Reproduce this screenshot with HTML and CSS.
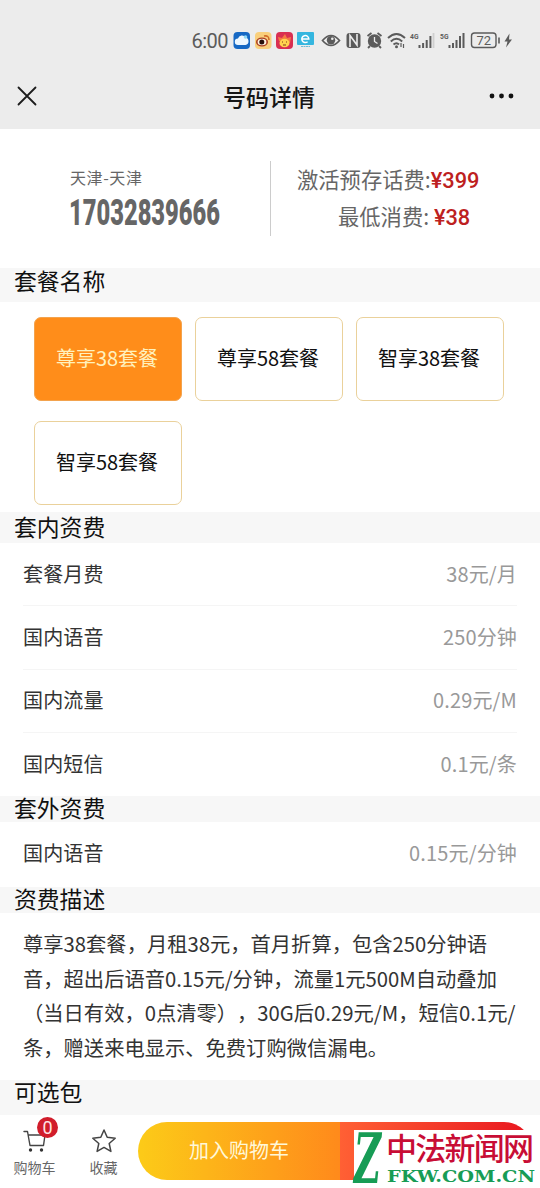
FILE: index.html
```html
<!DOCTYPE html>
<html lang="zh-CN">
<head>
<meta charset="utf-8">
<title>号码详情</title>
<link rel="stylesheet" href="styles.css">
</head>
<body>
<header class="top">
  <div class="status">
    <svg width="540" height="68" viewBox="0 0 540 68" font-family="Roboto, sans-serif" fill="#5b5b5b">
      <text x="191.500" y="47.500" font-size="20" textLength="37">6:00</text>
      <rect x="233.500" y="32" width="16.500" height="17" rx="4" fill="#1769c4"/>
      <path d="M238 45a3.200 3.200 0 0 1 0-6.400 4.200 4.200 0 0 1 7.500-1.200 3.900 3.900 0 0 1 0 7.600z" fill="#eef8ff"/>
      <circle cx="245.500" cy="37" r="1.800" fill="#8fd8f4"/>
      <rect x="255" y="32" width="16.500" height="17" rx="4" fill="#f9cf7c"/>
      <ellipse cx="262" cy="42" rx="6" ry="4.500" fill="#a93d20"/>
      <ellipse cx="262" cy="42" rx="4.400" ry="3.200" fill="#fff1df"/>
      <circle cx="261.800" cy="42" r="2.500" fill="#27100c"/>
      <path d="M264 36q5-1 5 4" fill="none" stroke="#d06a27" stroke-width="1.600"/>
      <rect x="276" y="32" width="17" height="17" rx="4" fill="#d92f51"/>
      <path d="M279 41l-1-4 4 1 3-4 2 4 4-1-1 6z" fill="#f47a43"/>
      <ellipse cx="284.500" cy="43" rx="5" ry="4.300" fill="#ffd34d"/>
      <path d="M282 42h1m3 0h1m-4 3h3" stroke="#81351d" stroke-width="1.200"/>
      <rect x="297" y="32" width="17" height="13" rx="1" fill="#35b6df"/>
      <path d="M302.500 39h6.300a3.500 3.500 0 1 0-1.200 2.700" fill="none" stroke="#fff" stroke-width="1.500"/>
      <path d="M301 46.500h9" stroke="#6fbcd6" stroke-width="1.200" stroke-dasharray="2 .5"/>
      <path d="M322.500 40.500q8.500-10 17 0-8.500 10-17 0z" fill="none" stroke="#5b5b5b" stroke-width="1.700"/>
      <circle cx="331" cy="40.300" r="4.200"/><circle cx="332.300" cy="38.800" r="1.300" fill="#ececec"/>
      <rect x="346.500" y="33" width="14" height="15" rx="3"/>
      <path d="M350 47V35.500l7 9.500V34" fill="none" stroke="#ececec" stroke-width="1.600"/>
      <circle cx="374.500" cy="41" r="6.700"/>
      <path d="M367.500 36l4-3m10 3l-4-3M370 46l-2 2m11-2l2 2" stroke="#5b5b5b" stroke-width="1.800"/>
      <path d="M374.500 37v4.500l3 2" fill="none" stroke="#ececec" stroke-width="1.300"/>
      <g fill="none" stroke="#5b5b5b" stroke-width="1.900"><path d="M388 38q8.500-8 17 0M390.800 41.500q5.700-5.500 11.400 0M393.500 44.500q3-2.500 5.500 0"/></g>
      <circle cx="396.500" cy="46.700" r="1.500"/><path d="M401 43v4m2.500-3v4" stroke="#5b5b5b" stroke-width="1.200"/>
      <text x="410" y="39" font-size="8" font-weight="700" textLength="8.500" lengthAdjust="spacingAndGlyphs">4G</text>
      <path d="M419.500 48v-3m3.600 3v-5m3.600 5v-8m3.700 8V36" stroke="#5b5b5b" stroke-width="2"/>
      <path d="M433.500 48V33" stroke="#cfcfcf" stroke-width="1.800"/>
      <text x="440" y="39" font-size="8" font-weight="700" textLength="8.500" lengthAdjust="spacingAndGlyphs">5G</text>
      <path d="M449.500 48v-3m3.500 3v-5m3.500 5v-8m3.500 8V36m3.500 12V33" stroke="#5b5b5b" stroke-width="2"/>
      <rect x="471.500" y="33" width="24.500" height="14.500" rx="3" fill="none" stroke="#5b5b5b" stroke-width="1.400"/>
      <text x="476.500" y="45" font-size="13" textLength="14.500">72</text>
      <path d="M499 37.500v6" stroke="#5b5b5b" stroke-width="1.600"/>
      <path d="M509.500 33.500l-5 8h3l-1.500 6 6-8h-3z"/>
    </svg>
  </div>
  <div class="nav">
    <svg width="20" height="20" viewBox="0 0 20 20"><path d="M1.500 1.500l17 17m0-17l-17 17" stroke="#1c1c1c" stroke-width="1.800" stroke-linecap="round"/></svg>
    <h1 class="nav-title">号码详情</h1>
    <svg width="25" height="6" viewBox="0 0 25 6" fill="#111"><circle cx="3" cy="3" r="2.400"/><circle cx="12.500" cy="3" r="2.400"/><circle cx="22" cy="3" r="2.400"/></svg>
  </div>
</header>

<section class="summary">
  <div class="number">
    <div class="region">天津-天津</div>
    <svg class="digits" width="160" height="44" viewBox="0 0 160 44"><text transform="translate(0 36.500) scale(1 1.560)" font-size="24" textLength="151" lengthAdjust="spacingAndGlyphs">17032839666</text></svg>
  </div>
  <div class="fees">
    <div class="fee">激活预存话费:<b class="price">¥399</b></div>
    <div class="fee fee-low">最低消费: <b class="price">¥38</b></div>
  </div>
</section>

<h2 class="bar bar-names">套餐名称</h2>
<div class="plans">
  <div class="plan plan-on">尊享38套餐</div>
  <div class="plan">尊享58套餐</div>
  <div class="plan">智享38套餐</div>
  <div class="plan">智享58套餐</div>
</div>

<h2 class="bar bar-inner">套内资费</h2>
<div class="rows">
  <div class="row"><span>套餐月费</span><span class="value">38元/月</span></div>
  <div class="row"><span>国内语音</span><span class="value">250分钟</span></div>
  <div class="row"><span>国内流量</span><span class="value">0.29元/M</span></div>
  <div class="row"><span>国内短信</span><span class="value">0.1元/条</span></div>
</div>

<h2 class="bar">套外资费</h2>
<div class="rows rows-outer">
  <div class="row"><span>国内语音</span><span class="value">0.15元/分钟</span></div>
</div>

<h2 class="bar">资费描述</h2>
<p class="desc">尊享38套餐，月租38元，首月折算，包含250分钟语<br>音，超出后语音0.15元/分钟，流量1元500M自动叠加<br>（当日有效，0点清零），30G后0.29元/M，短信0.1元/<br>条，赠送来电显示、免费订购微信漏电。</p>

<h2 class="bar bar-options">可选包</h2>
<footer class="actions">
  <div class="action">
    <svg width="24" height="24" viewBox="0 0 24 24" fill="none" stroke="#444" stroke-width="1.400" stroke-linejoin="round" stroke-linecap="round"><path d="M1 2.500h3.500l2.500 14h13.500L22 6H5.500"/><g fill="#333" stroke="none"><circle cx="7.500" cy="21" r="1.700"/><circle cx="18.500" cy="21" r="1.700"/></g></svg>
    <span>购物车</span>
    <span class="badge">0</span>
  </div>
  <div class="action">
    <svg width="24" height="24" viewBox="0 0 24 24" fill="none" stroke="#444" stroke-width="1.500" stroke-linejoin="round"><path d="M12 1l3.200 7.300 8 .9-6 5.300 1.700 7.900-6.900-4-6.900 4 1.700-7.900-6-5.300 8-.9z"/></svg>
    <span>收藏</span>
  </div>
  <div class="buttons">
    <div class="add">加入购物车</div>
    <div class="buy"></div>
  </div>
  <div class="mark">
    <svg width="182" height="54" viewBox="0 0 182 54">
      <text class="mark-z" transform="translate(0 53) scale(1 1.400)" font-size="50" textLength="27" lengthAdjust="spacingAndGlyphs">Z</text>
      <text class="mark-cn" x="32" y="30" font-size="31" textLength="148">中法新闻网</text>
      <text class="mark-url" x="33" y="52" font-size="17.500" textLength="148" lengthAdjust="spacingAndGlyphs">FKW.COM.CN</text>
    </svg>
  </div>
</footer>
</body>
</html>
```
FILE: styles.css
```css
* { box-sizing: border-box; }
body {
  margin: 0;
  width: 540px;
  height: 1188px;
  overflow: hidden;
  background: #fff;
  color: #333;
  font-family: "Noto Sans CJK SC", sans-serif;
  font-size: 20px;
}
svg { display: block; flex: none; overflow: visible; }
.top { height: 129px; background: #ececec; }
.status { height: 68px; }
.nav {
  display: grid;
  grid-template-columns: 20px 1fr 25px;
  align-items: center;
  height: 56px;
  padding: 0 26px 0 17px;
}
.nav-title {
  margin: 0;
  padding-left: 12px;
  font-size: 23px;
  font-weight: 500;
  line-height: 34px;
  text-align: center;
  color: #161616;
}

.summary { display: flex; height: 139px; padding-top: 32px; }
.number {
  width: 271px;
  height: 75px;
  padding: 4px 0 0 70px;
  border-right: 1px solid #ccc;
}
.region { font-size: 16px; line-height: 24px; color: #666; letter-spacing: 0.600px; }
.digits {
  margin: -1px 0 0 -1px;
  font-family: Roboto, sans-serif;
  font-weight: 900;
  fill: #666;
}
.fees { padding-left: 26px; color: #666; }
.fee { height: 37px; line-height: 35px; font-size: 21.300px; white-space: nowrap; }
.fee-low { padding-left: 41px; }
.price { font-family: Roboto, sans-serif; font-weight: 500; font-size: 21.800px; color: #bd2020; }

.bar {
  margin: 0;
  height: 26px;
  padding-left: 14px;
  background: #f7f7f7;
  color: #111;
  font-size: 22.800px;
  font-weight: 400;
  line-height: 23px;
}
.bar-names { height: 34px; line-height: 25px; }
.bar-inner { height: 31px; line-height: 30px; }
.bar-options { height: 35px; line-height: 23px; }

.plans {
  display: grid;
  grid-template-columns: repeat(3, 148px);
  grid-auto-rows: 84px;
  gap: 20px 13px;
  height: 210px;
  padding: 15px 0 0 34px;
}
.plan {
  display: flex;
  align-items: center;
  justify-content: center;
  border: 1.500px solid #ead19b;
  border-radius: 7px;
  color: #111;
  padding: 0 2px 4px 0;
}
.plan-on { background: #ff8d1a; border-color: #f3a34e; color: #fff1bd; }

.rows { height: 253px; padding: 0 23px; }
.row {
  display: flex;
  align-items: center;
  justify-content: space-between;
  height: 63.300px;
  padding-bottom: 2px;
  border-bottom: 1px solid #f5f5f5;
  letter-spacing: 0.150px;
}
.row:last-child { border-bottom: 0; }
.value { color: #999; }
.rows-outer { height: 65px; }
.desc {
  margin: 0;
  height: 167px;
  padding: 13px 0 0 23px;
  font-size: 20.300px;
  line-height: 34.700px;
  white-space: nowrap;
  text-spacing-trim: space-all;
}

.actions { display: flex; position: relative; height: 73px; }
.action {
  position: relative;
  display: flex;
  flex-direction: column;
  align-items: center;
  width: 69px;
  padding-top: 14px;
  font-size: 14px;
  line-height: 28px;
  color: #666;
}
.badge {
  position: absolute;
  left: 37px;
  top: 2px;
  width: 21px;
  height: 21px;
  border-radius: 50%;
  background: #d11d2b;
  color: #ffe3e3;
  font: 18px/21px Roboto, sans-serif;
  text-align: center;
}
.buttons { display: flex; width: 395px; height: 58px; margin-top: 7px; border-radius: 29px; overflow: hidden; }
.add {
  width: 202px;
  background: linear-gradient(90deg, #fccb18, #ff8a1b);
  color: #fff8d8;
  line-height: 56px;
  text-align: center;
}
.buy { flex: 1; background: linear-gradient(90deg, #ff6034, #e8151f); }
.mark { position: absolute; left: 354px; top: 15px; background: #fff; }
.mark-z { font-family: "DejaVu Serif", serif; font-weight: 700; font-style: italic; fill: #179c55; }
.mark-cn { font-family: "Noto Sans CJK SC", sans-serif; font-weight: 500; fill: #c80d35; }
.mark-url { font-family: "DejaVu Serif", serif; font-weight: 700; fill: #179c55; }
```
